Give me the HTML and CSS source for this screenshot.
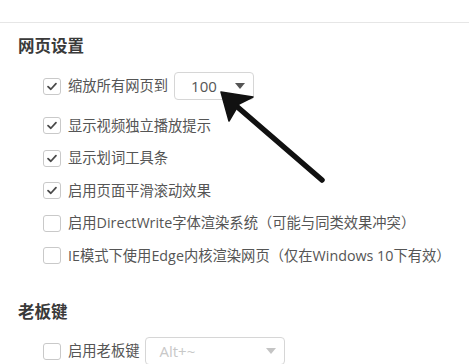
FILE: index.html
```html
<!DOCTYPE html>
<html lang="zh-CN">
<head>
<meta charset="utf-8">
<link rel="stylesheet" href="styles.css">
</head>
<body>
<div class="topbar"></div>
<section class="group first">
  <h2 class="title">网页设置</h2>
  <div class="row row-select">
    <span class="cb checked"><svg viewBox="0 0 17 17"><path d="M4 8.6 L7.2 11.6 L13 5.2"/></svg></span>
    <span class="label">缩放所有网页到</span>
    <div class="select zoom"><span class="val">100</span><span class="caret"></span></div>
  </div>
  <div class="row">
    <span class="cb checked"><svg viewBox="0 0 17 17"><path d="M4 8.6 L7.2 11.6 L13 5.2"/></svg></span>
    <span class="label">显示视频独立播放提示</span>
  </div>
  <div class="row">
    <span class="cb checked"><svg viewBox="0 0 17 17"><path d="M4 8.6 L7.2 11.6 L13 5.2"/></svg></span>
    <span class="label">显示划词工具条</span>
  </div>
  <div class="row">
    <span class="cb checked"><svg viewBox="0 0 17 17"><path d="M4 8.6 L7.2 11.6 L13 5.2"/></svg></span>
    <span class="label">启用页面平滑滚动效果</span>
  </div>
  <div class="row">
    <span class="cb"></span>
    <span class="label">启用DirectWrite字体渲染系统（可能与同类效果冲突）</span>
  </div>
  <div class="row">
    <span class="cb"></span>
    <span class="label">IE模式下使用Edge内核渲染网页（仅在Windows 10下有效）</span>
  </div>
</section>
<section class="group second">
  <h2 class="title">老板键</h2>
  <div class="row row-select">
    <span class="cb"></span>
    <span class="label">启用老板键</span>
    <div class="select boss disabled"><span class="val">Alt+~</span><span class="caret"></span></div>
  </div>
</section>
<svg class="annot" viewBox="0 0 469 364" width="469" height="364">
  <line x1="322" y1="180" x2="234" y2="104" stroke="#111" stroke-width="5.5" stroke-linecap="round"/>
  <path d="M221 92 L253 97 L239 104 L229 121 Z" fill="#111" stroke="#111" stroke-width="1.5" stroke-linejoin="round"/>
</svg>
</body>
</html>
```
FILE: styles.css
```css
html, body {
  margin: 0;
  padding: 0;
  background: #fff;
}
body {
  width: 469px;
  height: 364px;
  overflow: hidden;
  position: relative;
  font-family: "Open Sans", "Noto Sans CJK SC", sans-serif;
  color: #555;
  font-size: 14.3px;
}
.topbar {
  height: 22px;
  border-bottom: 1px solid #e6e6e6;
}
.group {
  padding-left: 18px;
}
.group.first {
  padding-top: 11px;
}
.group.second {
  padding-top: 28px;
}
.title {
  margin: 0;
  font-size: 16.5px;
  line-height: 22px;
  height: 22px;
  font-weight: bold;
  color: #3a3a3a;
  font-family: "Noto Sans CJK SC", sans-serif;
}
.row {
  display: flex;
  align-items: center;
  height: 32.5px;
  padding-left: 25px;
}
.first .row-select {
  height: 28px;
  margin-top: 16px;
  margin-bottom: 9.5px;
}
.second .row-select {
  height: 28px;
  margin-top: 15px;
}
.cb {
  box-sizing: border-box;
  width: 18px;
  height: 17px;
  border: 1px solid #c9c9c9;
  border-radius: 3px;
  background: #fff;
  flex: none;
  display: flex;
}
.cb svg {
  width: 16px;
  height: 15px;
}
.cb svg path {
  fill: none;
  stroke: #4a4a4a;
  stroke-width: 2;
  stroke-linecap: round;
  stroke-linejoin: round;
}
.label {
  margin-left: 7px;
  white-space: nowrap;
  line-height: 20px;
}
.select {
  box-sizing: border-box;
  height: 28px;
  margin-left: 6px;
  border: 1px solid #d6d6d6;
  border-radius: 4px;
  background: #fff;
  display: flex;
  align-items: center;
  justify-content: space-between;
}
.select.zoom {
  width: 80px;
  padding: 0 8px 0 16px;
}
.select.boss {
  width: 140px;
  padding: 0 8px 0 13px;
}
.val {
  font-size: 15px;
  color: #555;
}
.caret {
  width: 0;
  height: 0;
  border-left: 5.5px solid transparent;
  border-right: 5.5px solid transparent;
  border-top: 6px solid #555;
}
.disabled .val {
  color: #c8c8c8;
}
.disabled .caret {
  border-top-color: #c4c4c4;
}
.annot {
  position: absolute;
  left: 0;
  top: 0;
  pointer-events: none;
}
```
